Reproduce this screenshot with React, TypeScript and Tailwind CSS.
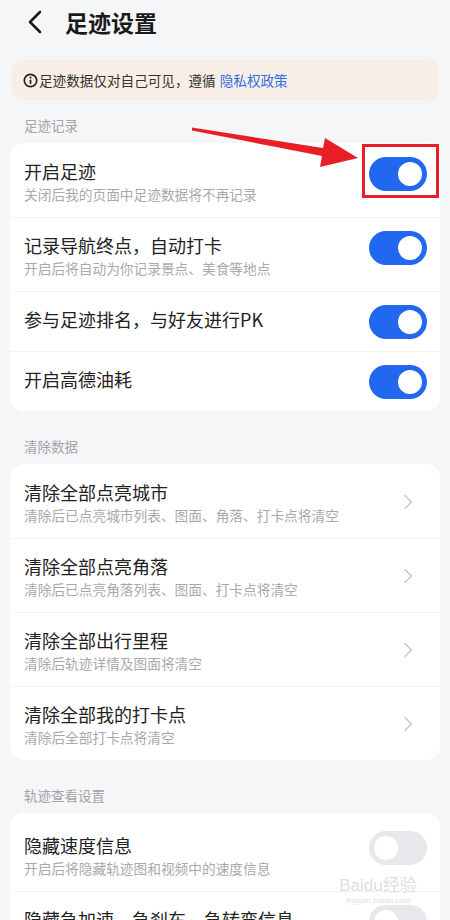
const font = { fontFamily: '"Noto Sans CJK SC", "Noto Sans", sans-serif' };

const Toggle = ({ on }: { on: boolean }) => (
  <div
    className={`w-[58px] h-[34px] mt-[-2px] rounded-full flex items-center px-[5px] shrink-0 ${
      on ? "bg-[#2267f0] justify-end" : "bg-[#e7e7ec] justify-start"
    }`}
  >
    <div className="w-[24px] h-[24px] rounded-full bg-white" />
  </div>
);

const Chevron = () => (
  <svg width="10" height="16" viewBox="0 0 10 16" className="shrink-0 self-center mr-[14px]">
    <path d="M2 1.5 L8.5 8 L2 14.5" fill="none" stroke="#c9c9cc" strokeWidth="1.5" strokeLinecap="round" strokeLinejoin="round" />
  </svg>
);

const Row = ({ title, sub, right, first }: any) => (
  <div className={`flex items-start pl-[14px] pr-[13px] pt-[15px] border-t ${first ? "border-transparent" : "border-[#f3f3f5]"} ${sub ? "pb-[14px]" : "h-[60px]"}`}>
    <div className="flex-1 flex flex-col gap-[2px]">
      <p className="text-[18px] leading-[24px] text-[#222]">{title}</p>
      {sub && <p className="text-[13.7px] leading-[18px] text-[#a9a9ad]">{sub}</p>}
    </div>
    {right}
  </div>
);

const Label = ({ children, top = "pt-[26px]" }: any) => (
  <p className={`${top} pb-[9px] pl-[24px] text-[13.5px] leading-[18px] text-[#a3a3a8]`}>{children}</p>
);

export default function App() {
  return (
    <div className="relative w-[450px] h-[920px] overflow-hidden bg-[#f5f6f8]" style={font}>
      <div className="h-[44px] flex items-center">
        <svg width="16" height="24" viewBox="0 0 16 24" className="ml-[27px]">
          <path d="M13 2 L3 12 L13 22" fill="none" stroke="#1a1a1a" strokeWidth="2.6" strokeLinecap="round" strokeLinejoin="round" />
        </svg>
        <h1 className="ml-[22px] text-[23px] font-bold text-[#1a1a1a]">足迹设置</h1>
      </div>

      <div className="mx-[12px] mt-[16px] h-[40px] rounded-[8px] bg-[#f9eee5] flex items-center pl-[11px] text-[13.6px] text-[#333]">
        <svg width="15" height="15" viewBox="0 0 16 16" className="mr-[1px]">
          <circle cx="8" cy="8" r="6.6" fill="none" stroke="#222" strokeWidth="1.8" />
          <circle cx="8" cy="4.9" r="1.1" fill="#222" />
          <rect x="7.1" y="6.8" width="1.8" height="5" rx="0.9" fill="#222" />
        </svg>
        <span>足迹数据仅对自己可见，遵循</span>
        <span className="ml-[4px] text-[#2f6fe8]">隐私权政策</span>
      </div>

      <Label top="pt-[16px]">足迹记录</Label>
      <div className="mx-[10px] rounded-[14px] bg-white">
        <Row first title="开启足迹" sub="关闭后我的页面中足迹数据将不再记录" right={<Toggle on />} />
        <Row title="记录导航终点，自动打卡" sub="开启后将自动为你记录景点、美食等地点" right={<Toggle on />} />
        <Row title="参与足迹排名，与好友进行PK" right={<Toggle on />} />
        <Row title="开启高德油耗" right={<Toggle on />} />
      </div>

      <Label>清除数据</Label>
      <div className="mx-[10px] rounded-[14px] bg-white">
        <Row first title="清除全部点亮城市" sub="清除后已点亮城市列表、图面、角落、打卡点将清空" right={<Chevron />} />
        <Row title="清除全部点亮角落" sub="清除后已点亮角落列表、图面、打卡点将清空" right={<Chevron />} />
        <Row title="清除全部出行里程" sub="清除后轨迹详情及图面将清空" right={<Chevron />} />
        <Row title="清除全部我的打卡点" sub="清除后全部打卡点将清空" right={<Chevron />} />
      </div>

      <Label>轨迹查看设置</Label>
      <div className="mx-[10px] pt-[4px] rounded-[14px] bg-white">
        <Row first title="隐藏速度信息" sub="开启后将隐藏轨迹图和视频中的速度信息" right={<Toggle on={false} />} />
        <Row title="隐藏急加速、急刹车、急转弯信息" sub="开启后将隐藏轨迹图和视频中的急加速等信息" right={<Toggle on={false} />} />
      </div>

      {/* watermark */}
      <div
        className="absolute left-[330px] top-[876px] w-[96px] flex flex-col items-center whitespace-nowrap text-[#dedee2] pointer-events-none"
        style={{ fontFamily: '"Liberation Sans", "Noto Sans CJK SC", sans-serif' }}
      >
        <span className="text-[17px] leading-[20px]">Baidu经验</span>
        <span className="text-[8px] leading-[10px]">jingyan.baidu.com</span>
      </div>

      {/* annotation overlay */}
      <div className="absolute left-[362px] top-[144px] w-[77px] h-[54px] border-[3px] border-[#e81f27]" />
      <svg className="absolute left-0 top-0" width="450" height="200" viewBox="0 0 450 200">
        <polygon
          points="192,127.5 323,148 325,138 358,158 320,167 322,156 192,130.5"
          fill="#e81f27"
        />
      </svg>
    </div>
  );
}
